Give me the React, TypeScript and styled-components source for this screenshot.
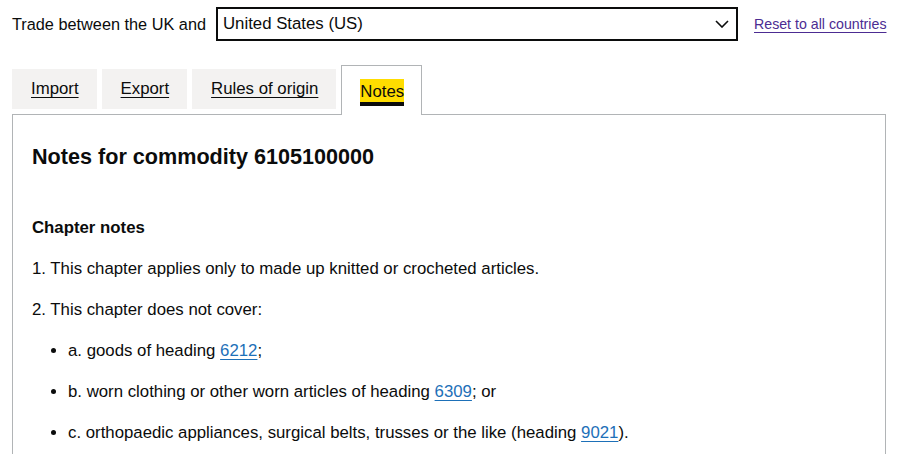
import React from "react";
import styled, { createGlobalStyle, css } from "styled-components";

const FONT = `"Liberation Sans", Arial, sans-serif`;

const GlobalStyle = createGlobalStyle`
  html, body {
    margin: 0;
    padding: 0;
    background: #ffffff;
  }
  body {
    font-family: ${FONT};
    color: #0b0c0c;
    -webkit-font-smoothing: antialiased;
  }
`;

const Page = styled.div`
  width: 874px;
  padding: 7px 14px 0 12px;
`;

const CountryRow = styled.div`
  display: flex;
  align-items: center;
  height: 34px;
  white-space: nowrap;
`;

const CountryLabel = styled.label`
  flex-shrink: 0;
  font-size: 16.3px;
  line-height: 24px;
  margin-right: 10px;
`;

const SelectBox = styled.div`
  box-sizing: border-box;
  flex-shrink: 0;
  width: 522px;
  height: 34px;
  border: 2px solid #0b0c0c;
  display: flex;
  align-items: center;
  justify-content: space-between;
  padding: 0 7px 0 5px;
  font-size: 16.8px;
`;

const ResetLink = styled.a`
  flex-shrink: 0;
  margin-left: 16px;
  font-size: 14.2px;
  color: #4c2c92;
  text-decoration: underline;
  text-decoration-thickness: 1px;
  text-underline-offset: 3px;
`;

const TabList = styled.ul`
  list-style: none;
  margin: 28px 0 0;
  padding: 0;
  display: flex;
  align-items: flex-start;
  border-bottom: 1px solid #b1b4b6;
`;

const Tab = styled.li<{ $selected?: boolean }>`
  box-sizing: border-box;
  margin-right: 5px;
  height: 40px;
  padding: 0 18px 0 19px;
  display: flex;
  align-items: center;
  background: #f3f2f1;
  font-size: 16.8px;
  white-space: nowrap;
  ${(p) =>
    p.$selected &&
    css`
      position: relative;
      height: 50px;
      margin-top: -4px;
      margin-bottom: -1px;
      padding: 0 17px 0 18px;
      background: #ffffff;
      border: 1px solid #b1b4b6;
      border-bottom: 0;
    `}
`;

const TabLink = styled.a`
  color: #0b0c0c;
  text-decoration: underline;
  text-decoration-thickness: 1px;
  text-underline-offset: 3px;
`;

const FocusedTabLink = styled.a`
  display: inline-block;
  line-height: 21px;
  margin-top: 1px;
  color: #0b0c0c;
  text-decoration: none;
  background: #ffdd00;
  box-shadow: 0 -2px #ffdd00, 0 4px #0b0c0c;
`;

const Panel = styled.section`
  border: 1px solid #b1b4b6;
  border-top: 0;
  padding: 27px 19px 30px;
`;

const Heading = styled.h2`
  margin: 0 0 43px;
  font-size: 21.6px;
  line-height: 30px;
  font-weight: 700;
`;

const SubHeading = styled.h3`
  margin: 0 0 16px;
  font-size: 16.8px;
  line-height: 26px;
  font-weight: 700;
`;

const Para = styled.p`
  margin: 0 0 17px;
  font-size: 16.8px;
  line-height: 24px;
`;

const Bullets = styled.ul`
  margin: 0;
  padding-left: 36px;
  list-style: disc;
`;

const Bullet = styled.li`
  margin: 0 0 17px;
  font-size: 16.8px;
  line-height: 24px;
`;

const CodeLink = styled.a`
  color: #1d70b8;
  text-decoration: underline;
  text-decoration-thickness: 1px;
  text-underline-offset: 3px;
`;

const Chevron = () => (
  <svg width="14" height="8" viewBox="0 0 14 8" aria-hidden="true">
    <path d="M1 1 L7 7 L13 1" fill="none" stroke="#0b0c0c" strokeWidth="1.6" />
  </svg>
);

export default function App() {
  return (
    <Page>
      <GlobalStyle />
      <CountryRow>
        <CountryLabel>Trade between the UK and</CountryLabel>
        <SelectBox>
          <span>United States (US)</span>
          <Chevron />
        </SelectBox>
        <ResetLink href="#">Reset to all countries</ResetLink>
      </CountryRow>

      <TabList>
        <Tab>
          <TabLink href="#">Import</TabLink>
        </Tab>
        <Tab>
          <TabLink href="#">Export</TabLink>
        </Tab>
        <Tab>
          <TabLink href="#">Rules of origin</TabLink>
        </Tab>
        <Tab $selected>
          <FocusedTabLink href="#">Notes</FocusedTabLink>
        </Tab>
      </TabList>

      <Panel>
        <Heading>Notes for commodity 6105100000</Heading>
        <SubHeading>Chapter notes</SubHeading>
        <Para>1. This chapter applies only to made up knitted or crocheted articles.</Para>
        <Para>2. This chapter does not cover:</Para>
        <Bullets>
          <Bullet>
            a. goods of heading <CodeLink href="#">6212</CodeLink>;
          </Bullet>
          <Bullet>
            b. worn clothing or other worn articles of heading <CodeLink href="#">6309</CodeLink>; or
          </Bullet>
          <Bullet>
            c. orthopaedic appliances, surgical belts, trusses or the like (heading{" "}
            <CodeLink href="#">9021</CodeLink>).
          </Bullet>
        </Bullets>
      </Panel>
    </Page>
  );
}
